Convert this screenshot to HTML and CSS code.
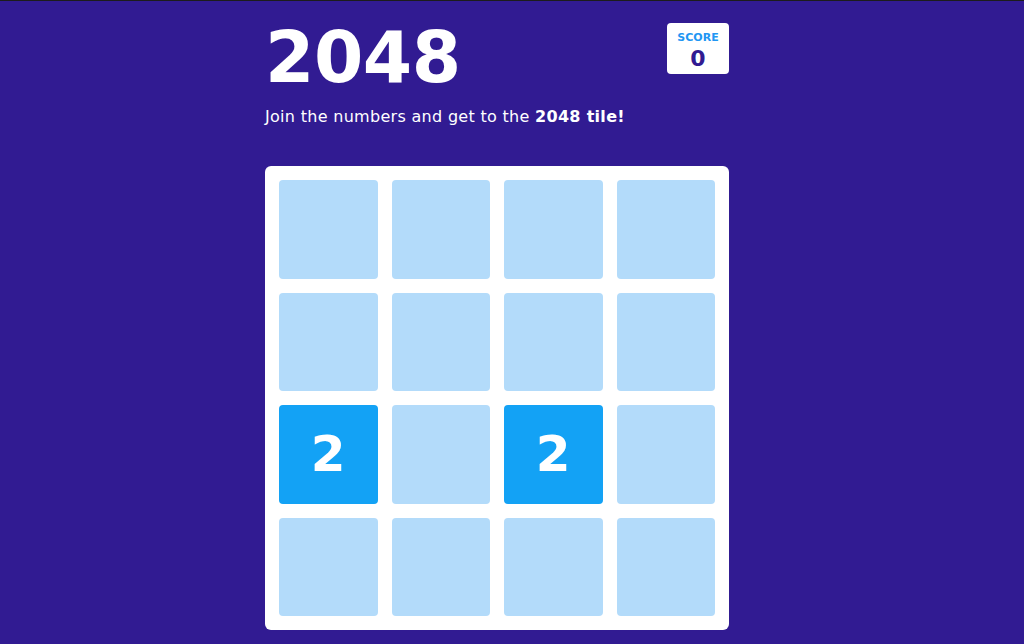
FILE: index.html
```html
<!DOCTYPE html>
<html lang="en">
<head>
<meta charset="utf-8">
<title>2048</title>
<link rel="stylesheet" href="styles.css">
</head>
<body>
<main class="game">
  <header class="header">
    <h1 class="title">2048</h1>
    <div class="score">
      <span class="score-label">SCORE</span>
      <span class="score-value">0</span>
    </div>
  </header>
  <p class="intro">Join the numbers and get to the <strong>2048 tile!</strong></p>
  <div class="board">
    <div class="tile"></div><div class="tile"></div><div class="tile"></div><div class="tile"></div>
    <div class="tile"></div><div class="tile"></div><div class="tile"></div><div class="tile"></div>
    <div class="tile tile-2">2</div><div class="tile"></div><div class="tile tile-2">2</div><div class="tile"></div>
    <div class="tile"></div><div class="tile"></div><div class="tile"></div><div class="tile"></div>
  </div>
</main>
</body>
</html>
```

FILE: styles.css
```css
html, body {
  margin: 0;
  padding: 0;
}
body {
  background: #311b92;
  border-top: 1px solid #1c1c1c;
  height: 643px;
  overflow: hidden;
  font-family: "DejaVu Sans", "Liberation Sans", sans-serif;
  color: #fff;
}
.game {
  width: 464px;
  margin-left: 265px;
  padding-top: 22px;
}
.header {
  display: flex;
  justify-content: space-between;
  align-items: flex-start;
}
.title {
  margin: 0;
  font-size: 71px;
  line-height: 70px;
  font-weight: 700;
  letter-spacing: -0.5px;
}
.score {
  background: #fff;
  border-radius: 4px;
  width: 62px;
  height: 51px;
  display: flex;
  flex-direction: column;
  align-items: center;
  padding-top: 9px;
  box-sizing: border-box;
}
.score-label {
  font-size: 11px;
  line-height: 12px;
  font-weight: 700;
  color: #2196f3;
}
.score-value {
  margin-top: 3px;
  font-size: 22px;
  line-height: 24px;
  font-weight: 700;
  color: #311b92;
}
.intro {
  margin: 14px 0 0;
  font-size: 16px;
  line-height: 20px;
  letter-spacing: 0.3px;
}
.intro strong {
  font-weight: 700;
}
.board {
  margin-top: 39px;
  background: #fff;
  border-radius: 6px;
  padding: 14px;
  display: grid;
  grid-template-columns: repeat(4, 1fr);
  grid-auto-rows: 98.5px;
  gap: 14px;
}
.tile {
  background: #b3dbfa;
  border-radius: 4px;
  display: flex;
  align-items: center;
  justify-content: center;
  font-size: 50px;
  font-weight: 700;
  color: #fff;
}
.tile-2 {
  background: #13a2f5;
}
```
